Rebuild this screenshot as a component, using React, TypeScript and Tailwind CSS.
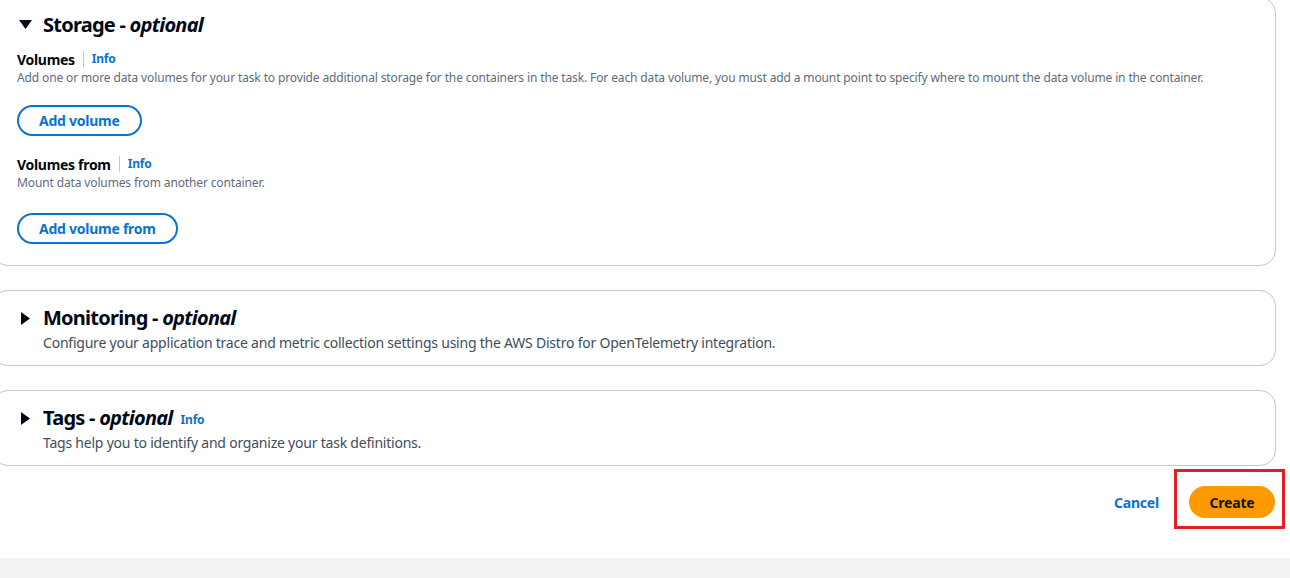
import { Fragment } from "react";

function Caret({ open }: { open?: boolean }) {
  return open ? (
    <svg width="13" height="10" viewBox="0 0 13 10" className="shrink-0">
      <path d="M0 0 L13 0 L6.5 9 Z" fill="#000716" />
    </svg>
  ) : (
    <svg width="10" height="13" viewBox="0 0 10 13" className="shrink-0">
      <path d="M0 0 L9 6.5 L0 13 Z" fill="#000716" />
    </svg>
  );
}

function Label({ text }: { text: string }) {
  return (
    <div className="flex items-center h-5">
      <span className="text-[14px] font-bold text-[#000716] tracking-[-0.3px]">{text}</span>
      <span className="mx-2 h-4 w-px bg-[#c6c6cd]" />
      <a className="text-[12px] font-bold text-[#0972d3] tracking-[-0.2px]">Info</a>
    </div>
  );
}

function Pill({ text }: { text: string }) {
  return (
    <button className="h-[31px] px-[20px] rounded-full border-2 border-[#0972d3] text-[14px] font-bold text-[#0972d3] bg-white tracking-[-0.25px]">
      {text}
    </button>
  );
}

const collapsed = [
  {
    title: "Monitoring",
    info: false,
    desc: "Configure your application trace and metric collection settings using the AWS Distro for OpenTelemetry integration.",
  },
  {
    title: "Tags",
    info: true,
    desc: "Tags help you to identify and organize your task definitions.",
  },
];

export default function App() {
  return (
    <div
      className="relative h-[578px] w-full overflow-hidden bg-white text-[#000716]"
      style={{ fontFamily: '"Noto Sans", Arial, sans-serif' }}
    >
      <div className="ml-[-8px] w-[1284px] flex flex-col gap-6">
        {/* Storage */}
        <section className="mt-[-3px] h-[269px] rounded-2xl border border-[#c6c6cd] pl-[24px] pt-[15px]">
          <div className="flex items-center gap-[11px] h-6 ml-[2px]">
            <Caret open />
            <h2 className="text-[20px] font-bold leading-6 tracking-[-0.75px]">
              Storage - <i>optional</i>
            </h2>
          </div>
          <div className="mt-[12px]">
            <Label text="Volumes" />
            <p className="text-[12px] leading-4 text-[#5f6b7a] mt-[1px] tracking-[-0.13px]">
              Add one or more data volumes for your task to provide additional storage for the containers in the task. For each data volume, you must add a mount point to specify where to mount the data volume in the container.
            </p>
            <div className="mt-[19px]">
              <Pill text="Add volume" />
            </div>
          </div>
          <div className="mt-[18px]">
            <Label text="Volumes from" />
            <p className="text-[12px] leading-4 text-[#5f6b7a] mt-[1px] tracking-[-0.13px]">
              Mount data volumes from another container.
            </p>
            <div className="mt-[22px]">
              <Pill text="Add volume from" />
            </div>
          </div>
        </section>

        {collapsed.map((c) => (
          <Fragment key={c.title}>
            <section className="h-[76px] rounded-2xl border border-[#c6c6cd] pl-[28px] pt-[15px]">
              <div className="flex items-center gap-3 h-6">
                <Caret />
                <h2 className="text-[20px] font-bold leading-6 tracking-[-0.75px]">
                  {c.title} - <i>optional</i>
                </h2>
                {c.info && (
                  <a className="text-[12px] font-bold text-[#0972d3] mt-[4px] -ml-[4px] tracking-[-0.2px]">Info</a>
                )}
              </div>
              <p className="ml-[22px] mt-[3px] text-[14px] leading-5 text-[#414d5c] tracking-[-0.22px]">{c.desc}</p>
            </section>
          </Fragment>
        ))}

        <div className="flex items-center justify-end gap-[30px] pr-[1px] mt-[-4px] h-8">
          <a className="text-[14px] font-bold text-[#0972d3] tracking-[-0.2px]">Cancel</a>
          <button className="h-8 w-[86px] rounded-full bg-[#ff9900] text-[14px] font-bold text-[#0f141a] tracking-[-0.2px]">
            Create
          </button>
        </div>
      </div>

      {/* annotation box */}
      <div className="absolute left-[1174px] top-[469px] h-[60px] w-[111px] border-[3px] border-[#e31e24]" />

      <div className="absolute bottom-0 left-0 right-0 h-[20px] bg-[#f2f3f3]" />
    </div>
  );
}
